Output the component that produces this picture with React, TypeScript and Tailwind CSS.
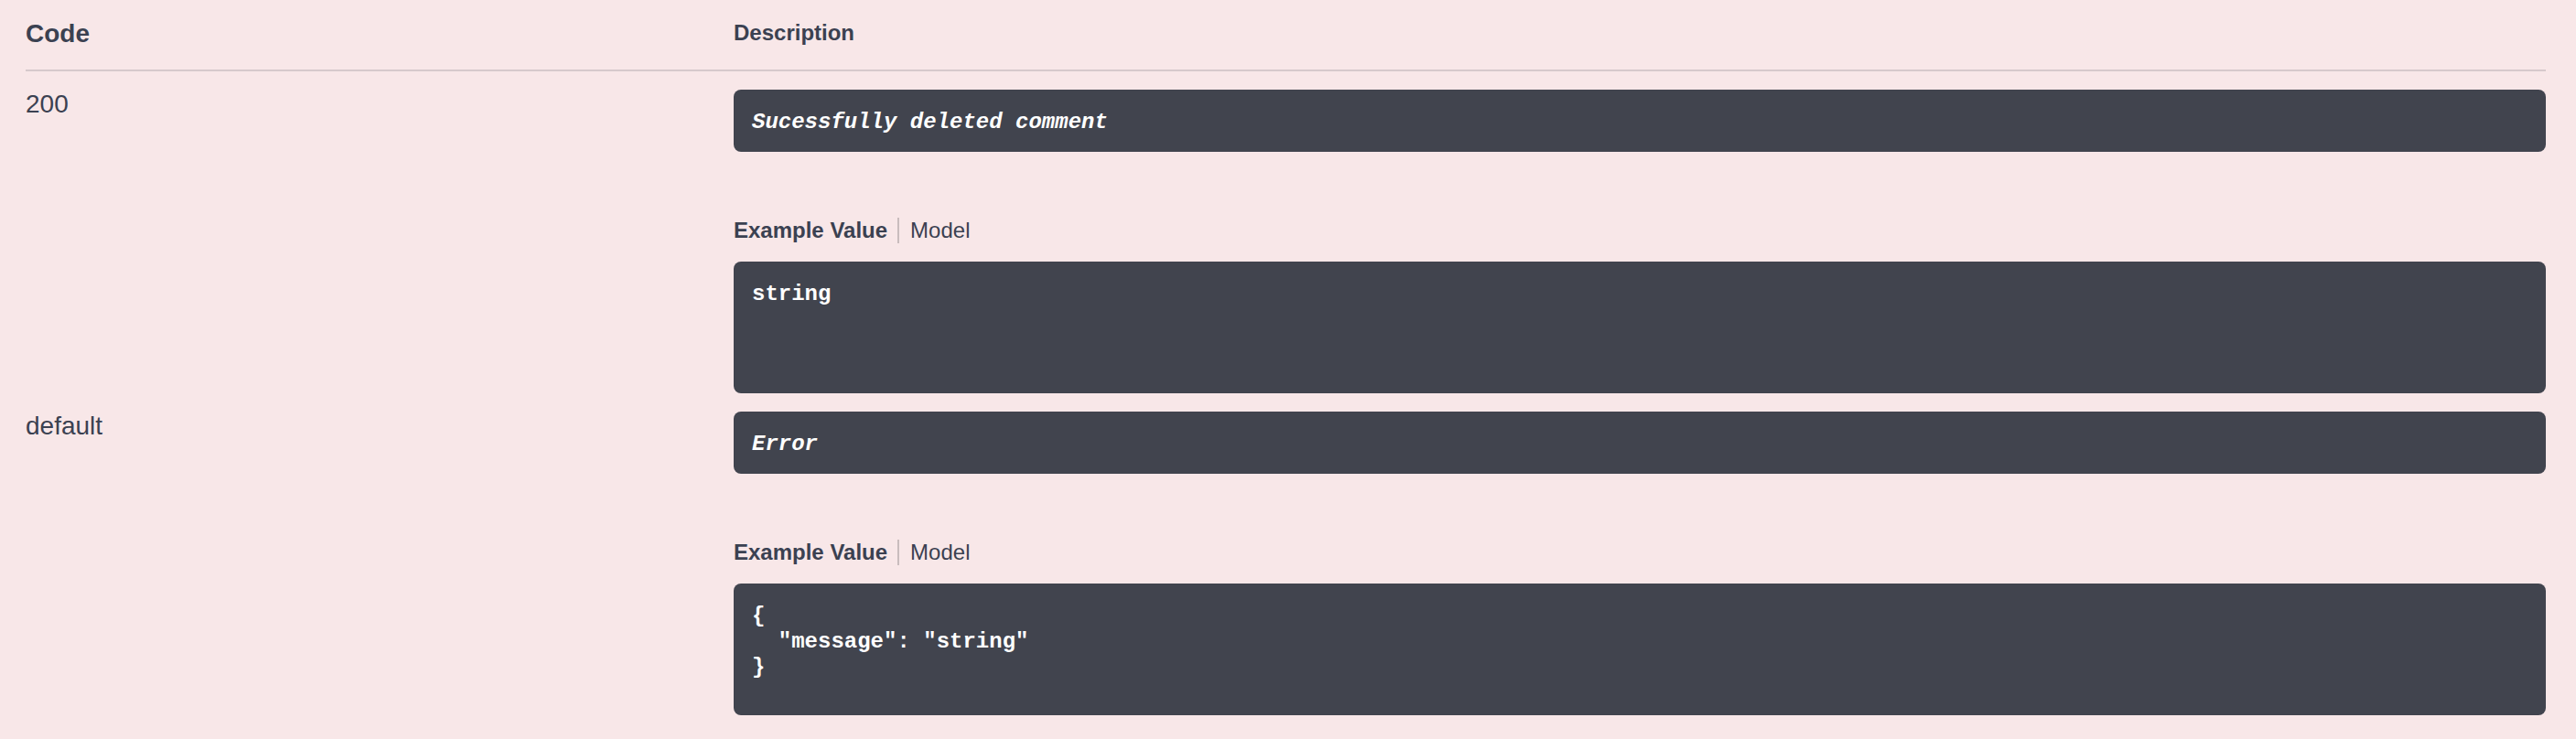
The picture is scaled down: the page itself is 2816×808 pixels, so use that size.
import React from 'react';

interface ResponseRowProps {
  code: string;
  description: string;
  example: string;
}

const sans = "font-['Liberation_Sans',Arial,sans-serif]";
const mono = "font-['Liberation_Mono','Courier_New',monospace]";

function ExampleTabs() {
  return (
    <div className={`${sans} mt-[72px] mb-[20px] flex h-[28px] items-stretch text-[24px] leading-[28px] text-[#3b4151]`}>
      <span className="border-r-2 border-[#c9bcbd] pr-[11px] font-bold">Example Value</span>
      <span className="pl-[12px]">Model</span>
    </div>
  );
}

function ResponseRow({ code, description, example }: ResponseRowProps) {
  return (
    <div className="flex pt-[20px]">
      <div className={`${sans} w-[774px] shrink-0 text-[28px] leading-[32px] text-[#3b4151]`}>{code}</div>
      <div className="min-w-0 flex-1">
        <div className={`${mono} rounded-[8px] bg-[#41444e] px-[20px] pt-[22px] pb-[18px] text-[24px] leading-[28px] font-bold italic text-white`}>
          {description}
        </div>
        <ExampleTabs />
        <pre className={`${mono} min-h-[144px] whitespace-pre rounded-[8px] bg-[#41444e] px-[20px] pt-[22px] pb-[18px] text-[24px] leading-[28px] font-bold text-white`}>
          {example}
        </pre>
      </div>
    </div>
  );
}

export default function App() {
  return (
    <div className="min-h-screen bg-[#f8e7e8] pl-[28px] pr-[33px]">
      <div className="flex h-[78px] border-b-2 border-[#d6c9cc]">
        <div className={`${sans} w-[774px] shrink-0 pt-[21px] text-[28px] leading-[32px] font-bold text-[#3b4151]`}>
          Code
        </div>
        <div className={`${sans} pt-[20px] text-[24px] leading-[32px] font-bold text-[#3b4151]`}>
          Description
        </div>
      </div>
      <ResponseRow code="200" description="Sucessfully deleted comment" example="string" />
      <ResponseRow
        code="default"
        description="Error"
        example={'{\n  "message": "string"\n}'}
      />
    </div>
  );
}
